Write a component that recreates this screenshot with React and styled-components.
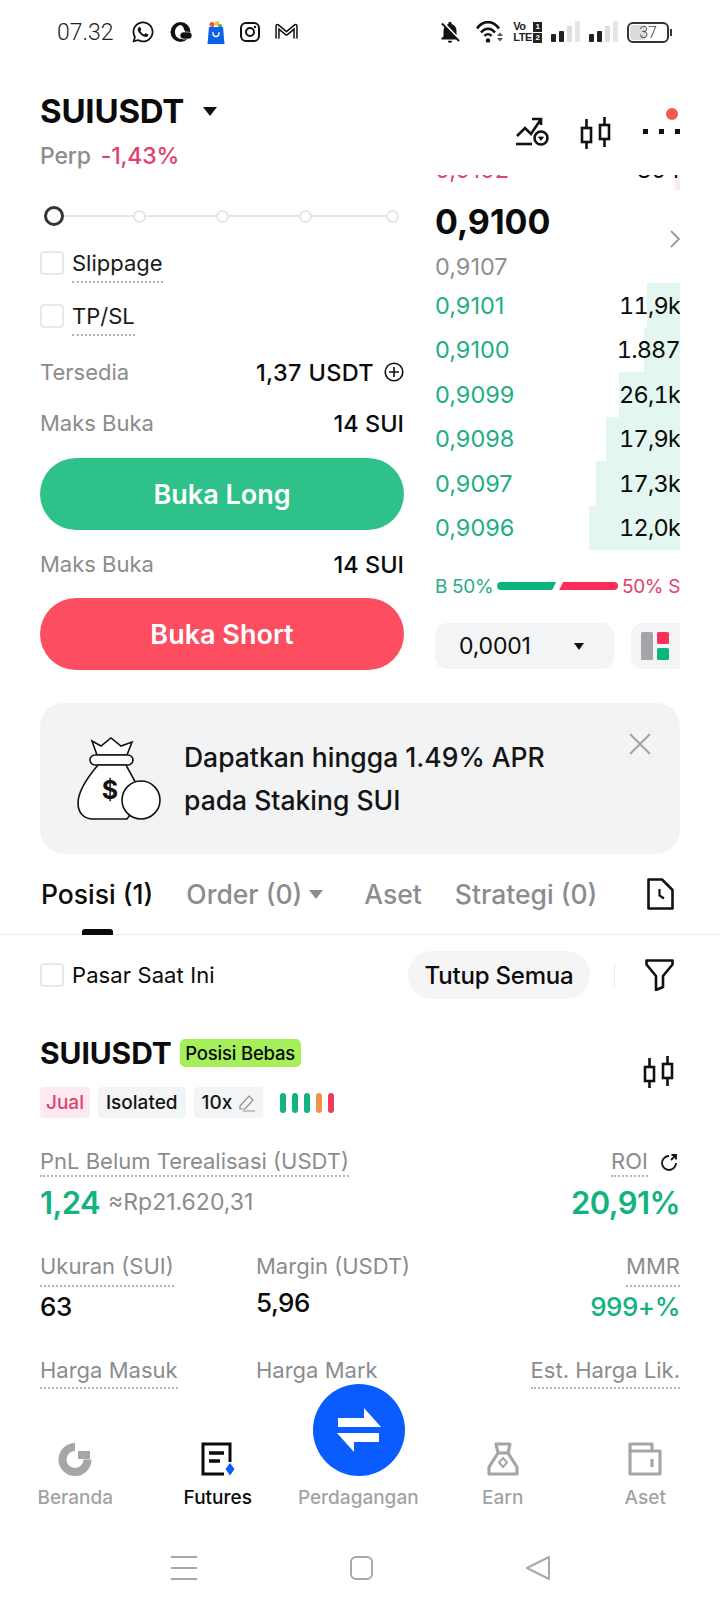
import React from "react";
import styled, { createGlobalStyle } from "styled-components";
import { FaWhatsapp } from "react-icons/fa";
import { MdNotificationsOff } from "react-icons/md";

const GREEN = "#12b281";
const RED = "#e0426b";
const GRAY = "#8c8c8c";
const SOFT = "#f3f4f6";

const GlobalStyle = createGlobalStyle`
  html, body { margin: 0; padding: 0; background: #fff; }
  * { box-sizing: border-box; }
  body { font-family: Inter, "Noto Sans", sans-serif; color: #0b0b0b; }
`;

const Phone = styled.div`
  width: 720px;
  height: 1612px;
  display: flex;
  flex-direction: column;
  overflow: hidden;
  background: #fff;
`;

/* status bar */
const StatusBar = styled.div`
  height: 64px;
  flex: none;
  display: flex;
  align-items: center;
  justify-content: space-between;
  padding: 0 51px 0 57px;
`;
const StatusGroup = styled.div`
  display: flex;
  align-items: center;
  gap: ${(p) => p.$gap || 14}px;
`;
const Clock = styled.span`
  font-family: Roboto, sans-serif;
  font-weight: 300;
  font-size: 23px;
  color: #222;
  margin-right: 2px;
`;
const Volte = styled.div`
  display: grid;
  grid-template-columns: auto 9px;
  column-gap: 1px;
  align-items: center;
  justify-items: start;
  font-family: "Liberation Sans", sans-serif;
  font-weight: 700;
  font-size: 11px;
  line-height: 11px;
  letter-spacing: -0.4px;
  color: #222;
`;
const SimTag = styled.span`
  width: 9px;
  height: 10px;
  background: #222;
  color: #fff;
  font-size: 8px;
  line-height: 10px;
  text-align: center;
`;
const Battery = styled.div`
  width: 42px;
  height: 21px;
  border: 2px solid #333;
  border-radius: 6px;
  padding: 1px;
  position: relative;
  background: linear-gradient(to right, #dcdcdc 0 ${(p) => p.$level * 0.42}px, #fff ${(p) => p.$level * 0.42}px);
  background-clip: content-box;
  font-family: Roboto, sans-serif;
  font-weight: 300;
  font-size: 16px;
  line-height: 15px;
  text-align: center;
  color: #444;
  &::after {
    content: "";
    position: absolute;
    right: -5px;
    top: 5px;
    width: 2px;
    height: 7px;
    background: #333;
  }
`;
const BellSlot = styled.span`
  display: flex;
  margin-right: 4px;
`;

/* header */
const Header = styled.div`
  height: 111px;
  flex: none;
  display: flex;
  justify-content: space-between;
  padding: 27px 40px 0;
`;
const TitleRow = styled.div`
  display: flex;
  align-items: center;
  height: 40px;
`;
const Title = styled.h1`
  margin: 0;
  font-size: 33px;
  font-weight: 700;
  letter-spacing: -0.2px;
  line-height: 40px;
`;
const Caret = styled.i`
  width: 0;
  height: 0;
  flex: none;
  border-left: ${(p) => p.$size || 7}px solid transparent;
  border-right: ${(p) => p.$size || 7}px solid transparent;
  border-top: ${(p) => (p.$size || 7) * 1.3}px solid ${(p) => p.$color || "#111"};
  margin-left: ${(p) => p.$gap || 0}px;
`;
const SubRow = styled.div`
  display: flex;
  gap: 10px;
  height: 30px;
  margin-top: 10px;
  font-size: 23px;
  line-height: 30px;
  font-weight: 500;
  letter-spacing: -0.2px;
`;
const Muted = styled.span`
  color: ${GRAY};
`;
const Change = styled.span`
  color: ${RED};
`;
const HeaderTools = styled.div`
  display: flex;
  align-items: flex-start;
  gap: 31px;
  padding-top: 26px;
  position: relative;
`;
const Notice = styled.span`
  position: absolute;
  right: 2px;
  top: 17px;
  width: 12px;
  height: 12px;
  border-radius: 50%;
  background: #ee5c4c;
`;

/* trading area */
const Main = styled.div`
  flex: 1;
  min-height: 0;
  overflow: hidden;
`;
const Trade = styled.div`
  display: grid;
  grid-template-columns: 364px 245px;
  column-gap: 31px;
  padding: 0 40px;
  height: 495px;
`;
const Form = styled.div`
  display: flex;
  flex-direction: column;
`;
const Slider = styled.div`
  display: flex;
  align-items: center;
  height: 20px;
  margin: 31px 0 0 4px;
`;
const Thumb = styled.span`
  width: 20px;
  height: 20px;
  flex: none;
  border-radius: 50%;
  border: 3px solid #333;
`;
const Stop = styled.span`
  width: 13px;
  height: 13px;
  flex: none;
  border-radius: 50%;
  border: 2px solid #e4e6e8;
`;
const Track = styled.span`
  flex: none;
  width: ${(p) => p.$w}px;
  height: 2px;
  background: #e4e6e8;
`;
const CheckRow = styled.div`
  display: flex;
  align-items: flex-start;
  gap: 8px;
  margin-top: ${(p) => p.$top}px;
`;
const Box = styled.span`
  width: 24px;
  height: 24px;
  flex: none;
  border: 2px solid #e8e9eb;
  border-radius: 4px;
`;
const CheckText = styled.span`
  font-size: 22px;
  line-height: 24px;
  color: #1a1a1a;
`;
const Dotted = styled(CheckText)`
  padding-bottom: 6px;
  border-bottom: 2px dotted #b5b5b5;
`;
const InfoRow = styled.div`
  display: flex;
  align-items: center;
  justify-content: space-between;
  height: 30px;
  margin-top: ${(p) => p.$top}px;
  font-size: 22px;
`;
const InfoValue = styled.span`
  display: flex;
  align-items: center;
  gap: 10px;
  font-size: 23.5px;
  font-weight: 500;
  letter-spacing: ${(p) => p.$track || 0}px;
`;
const BigButton = styled.button`
  display: block;
  width: 100%;
  height: 72px;
  flex: none;
  margin-top: ${(p) => p.$top}px;
  border: 0;
  border-radius: 36px;
  background: ${(p) => p.$bg};
  color: #fff;
  font-family: inherit;
  font-size: 27px;
  font-weight: 600;
`;

/* order book */
const Book = styled.div`
  overflow: hidden;
  display: flex;
  flex-direction: column;
`;
const BookRow = styled.div`
  display: flex;
  align-items: center;
  justify-content: space-between;
  flex: none;
  height: ${(p) => p.$height || 44.5}px;
  margin-top: ${(p) => p.$top || 0}px;
  font-size: 23.5px;
  background: linear-gradient(to left, ${(p) => p.$fill} ${(p) => p.$depth}px, transparent ${(p) => p.$depth}px);
`;
const BookPrice = styled.span`
  color: ${(p) => p.$color};
`;
const BookSize = styled.span`
  font-variant-numeric: tabular-nums;
  letter-spacing: -0.8px;
`;
const MidRow = styled.div`
  display: flex;
  justify-content: space-between;
  align-items: flex-start;
  flex: none;
  height: 40px;
  margin-top: 12px;
`;
const MidPrice = styled.span`
  font-size: 34px;
  line-height: 40px;
  font-weight: 700;
`;
const MarkPrice = styled.div`
  flex: none;
  height: 30px;
  margin: 10px 0 1px;
  font-size: 23.5px;
  line-height: 30px;
  color: #8f8f8f;
`;
const RatioRow = styled.div`
  display: flex;
  align-items: center;
  justify-content: space-between;
  flex: none;
  height: 24px;
  margin-top: 24px;
  font-size: 19px;
  white-space: nowrap;
  letter-spacing: -0.35px;
`;
const RatioBars = styled.div`
  display: flex;
  gap: 3px;
  flex: 1;
  margin: 0 4px;
`;
const RatioBar = styled.span`
  flex: 1;
  height: 8px;
  background: ${(p) => p.$color};
  border-radius: ${(p) => (p.$left ? "4px 0 0 4px" : "0 4px 4px 0")};
  clip-path: ${(p) =>
    p.$left
      ? "polygon(0 0, 100% 0, calc(100% - 4px) 100%, 0 100%)"
      : "polygon(4px 0, 100% 0, 100% 100%, 0 100%)"};
`;
const BookTools = styled.div`
  display: flex;
  gap: 17px;
  flex: none;
  height: 46px;
  margin-top: 25px;
  width: 260px;
`;
const StepSelect = styled.div`
  width: 179px;
  display: flex;
  align-items: center;
  justify-content: space-between;
  padding: 0 30px 0 24px;
  background: ${SOFT};
  border-radius: 12px;
  font-size: 23px;
  letter-spacing: -0.2px;
`;
const LayoutButton = styled.div`
  width: 60px;
  background: ${SOFT};
  border-radius: 12px;
  padding: 9px 10px;
`;

/* promo */
const Promo = styled.div`
  margin: 33px 40px 0;
  height: 151px;
  padding: 33px 29px 0 37px;
  display: flex;
  align-items: flex-start;
  gap: 21px;
  background: #f2f3f5;
  border-radius: 24px;
`;
const PromoText = styled.p`
  flex: 1;
  margin: 0;
  font-size: 26.5px;
  line-height: 43px;
  font-weight: 500;
  color: #141414;
`;
const PromoClose = styled.div`
  display: flex;
  margin-top: -3px;
`;

/* tabs */
const Tabs = styled.div`
  height: 81px;
  display: flex;
  align-items: center;
  gap: 33px;
  padding: 0 46px 0 41px;
  border-bottom: 1px solid #eeeeee;
`;
const Tab = styled.div`
  display: flex;
  align-items: center;
  position: relative;
  height: 100%;
  font-size: 26.5px;
  font-weight: 500;
  color: ${(p) => (p.$active ? "#0b0b0b" : "#8c8c8c")};
  margin-right: ${(p) => p.$after || 0}px;
  ${(p) =>
    p.$active &&
    `&::after {
      content: "";
      position: absolute;
      left: 41px;
      bottom: -1px;
      width: 31px;
      height: 6px;
      border-radius: 3px 3px 0 0;
      background: #0b0b0b;
    }`}
`;
const TabIcon = styled.div`
  margin-left: auto;
  display: flex;
`;
const FilterRow = styled.div`
  height: 80px;
  display: flex;
  align-items: center;
  padding: 0 46px 0 40px;
`;
const FilterCheck = styled.div`
  display: flex;
  align-items: center;
  gap: 8px;
  margin-right: auto;
  font-size: 22px;
  letter-spacing: 0.1px;
`;
const Pill = styled.div`
  width: 182px;
  height: 48px;
  display: flex;
  align-items: center;
  justify-content: center;
  background: #f5f5f5;
  border-radius: 24px;
  font-size: 24px;
  font-weight: 500;
  letter-spacing: -0.2px;
`;
const Split = styled.span`
  width: 1px;
  height: 24px;
  background: #eeeeee;
  margin: 0 30px 0 24px;
`;

/* position card */
const Card = styled.div`
  padding: 18px 40px 0;
`;
const CardHead = styled.div`
  display: flex;
  justify-content: space-between;
  align-items: center;
`;
const CardIcon = styled.div`
  display: flex;
  margin: 0 6px 8px 0;
`;
const CardTitle = styled.div`
  display: flex;
  align-items: center;
  gap: 8px;
  height: 40px;
`;
const CardName = styled.span`
  font-size: 30px;
  font-weight: 700;
  letter-spacing: -0.1px;
`;
const Badge = styled.span`
  height: 28px;
  padding: 0 4px;
  width: 121px;
  border-radius: 5px;
  background: #a5f05a;
  font-size: 18.5px;
  font-weight: 500;
  line-height: 28px;
  text-align: center;
  letter-spacing: -0.2px;
  white-space: nowrap;
`;
const ChipRow = styled.div`
  display: flex;
  align-items: center;
  gap: 8px;
  margin-top: 14px;
`;
const Chip = styled.span`
  display: flex;
  align-items: center;
  gap: 6px;
  height: 31px;
  padding: 0 ${(p) => p.$pad || 8}px;
  border-radius: 4px;
  background: ${(p) => p.$bg || SOFT};
  color: ${(p) => p.$color || "#141414"};
  font-size: 19px;
  font-weight: 500;
`;
const Leverage = styled.div`
  display: flex;
  gap: 6px;
  margin-left: 9px;
`;
const LeverageBar = styled.span`
  width: 6px;
  height: 20px;
  border-radius: 3px;
  background: ${(p) => p.$color};
`;
const PnlHead = styled.div`
  display: flex;
  justify-content: space-between;
  margin-top: 30px;
`;
const StatLabel = styled.span`
  display: inline-block;
  font-size: 22px;
  line-height: 27px;
  color: ${GRAY};
  padding-bottom: ${(p) => p.$pad || 0}px;
  border-bottom: 2px dotted ${(p) => (p.$plain ? "transparent" : "#b5b5b5")};
  white-space: nowrap;
`;
const RoiLabel = styled.div`
  display: flex;
  align-items: flex-start;
  gap: 12px;
  padding-right: 2px;
`;
const PnlValues = styled.div`
  display: flex;
  justify-content: space-between;
  align-items: center;
  height: 36px;
  margin-top: 7px;
`;
const PnlLeft = styled.div`
  display: flex;
  align-items: center;
  gap: 8px;
`;
const BigGain = styled.span`
  font-size: 31px;
  font-weight: 600;
  letter-spacing: -0.6px;
  color: ${GREEN};
`;
const Approx = styled.span`
  font-size: 23px;
  color: ${GRAY};
`;
const StatGrid = styled.div`
  display: grid;
  grid-template-columns: 216px 1fr auto;
  margin-top: ${(p) => p.$top}px;
`;
const StatCell = styled.div`
  display: flex;
  flex-direction: column;
  align-items: ${(p) => (p.$end ? "flex-end" : "flex-start")};
`;
const StatValue = styled.span`
  font-size: 26px;
  line-height: 30px;
  font-weight: 500;
  letter-spacing: -0.5px;
  margin-top: ${(p) => p.$top || 5}px;
  color: ${(p) => p.$color || "#0b0b0b"};
`;

/* bottom nav */
const BottomNav = styled.div`
  flex: none;
  height: 136px;
  position: relative;
  display: grid;
  grid-template-columns: repeat(5, 142.5px);
  padding: 48px 0 0 4px;
  background: #fff;
`;
const NavItem = styled.div`
  display: flex;
  flex-direction: column;
  align-items: center;
  height: 69px;
  justify-content: flex-end;
  gap: 9px;
  font-size: 19px;
  line-height: 26px;
  font-weight: 500;
  color: ${(p) => (p.$active ? "#0b0b0b" : "#a3a3a3")};
  padding-right: ${(p) => p.$nudge || 0}px;
`;
const Fab = styled.div`
  position: absolute;
  left: 313px;
  top: -10px;
  width: 92px;
  height: 92px;
  border-radius: 50%;
  background: #0a5cff;
`;
const SystemNav = styled.div`
  flex: none;
  height: 82px;
  display: flex;
  align-items: center;
  justify-content: center;
  gap: 153px;
  padding-bottom: 6px;
`;

const Icon = ({ w, h, children, ...rest }) => (
  <svg width={w} height={h} viewBox={`0 0 ${w} ${h}`} fill="none" {...rest}>
    {children}
  </svg>
);

const AdsIcon = () => (
  <Icon w={22} h={22}>
    <circle cx="10.5" cy="11" r="10" fill="#111" />
    <path d="M5 11c0-4 3-7 6-7 2 1 3 3 3 5 2 1 1 2 0 3-3 0-3 4 1 6-6 1-10-2-10-7z" fill="#fff" />
    <rect x="10" y="11" width="12" height="7" rx="3.5" fill="#111" stroke="#fff" strokeWidth="0.6" />
  </Icon>
);
const BagIcon = () => (
  <Icon w={18} h={23}>
    <circle cx="5" cy="3.5" r="2.5" fill="#e5544b" />
    <circle cx="10" cy="2.5" r="2.4" fill="#f2c230" />
    <circle cx="13" cy="5" r="2" fill="#35b26b" />
    <path d="M2 6h14l1.5 17H.5z" fill="#0b62e8" />
    <path d="M6 11v1.5a3 3 0 0 0 6 0V11" stroke="#fff" strokeWidth="1.3" />
  </Icon>
);
const InstaIcon = () => (
  <Icon w={20} h={20}>
    <rect x="1" y="1" width="18" height="18" rx="5" stroke="#111" strokeWidth="2" />
    <circle cx="10" cy="10" r="4" stroke="#111" strokeWidth="2" />
    <circle cx="15" cy="5" r="1.2" fill="#111" />
  </Icon>
);
const MailIcon = () => (
  <Icon w={23} h={18}>
    <path d="M2.5 15.5V3l9 7.5 9-7.5v12.5" stroke="#111" strokeWidth="4.4" strokeLinejoin="round" />
    <path d="M2.5 15.5V3l9 7.5 9-7.5v12.5" stroke="#fff" strokeWidth="1.4" strokeLinejoin="round" />
  </Icon>
);
const WifiIcon = () => (
  <Icon w={28} h={22}>
    <path d="M1 7.5C7-1 17-1 23 7.5" stroke="#111" strokeWidth="2.6" />
    <path d="M5 11.5c4-5 10-5 14 0" stroke="#111" strokeWidth="2.6" />
    <path d="M8.5 15c2-2.5 5-2.5 7 0" stroke="#111" strokeWidth="2.4" />
    <circle cx="12" cy="19.5" r="2.2" fill="#111" />
    <path d="M21 15l3-3.5 3 3.5zM21 17l3 3.5 3-3.5z" fill="#555" />
  </Icon>
);
const SignalIcon = () => (
  <Icon w={29} h={22}>
    <rect x="0" y="13" width="5" height="8" rx="1" fill="#222" />
    <rect x="8" y="10" width="5" height="11" rx="1" fill="#222" />
    <rect x="16" y="5" width="5" height="16" fill="#dedede" />
    <rect x="24" y="0" width="5" height="21" fill="#e6e6e6" />
  </Icon>
);
const TrendIcon = () => (
  <Icon w={34} h={30} stroke="#111" strokeWidth="2.6">
    <path d="M2 19l8-8 6 6L25 3.5M17 2h9v6" />
    <path d="M1 27h16" />
    <circle cx="26" cy="21" r="6.5" />
    <path d="M23.5 20h5l-2.5 3.5z" fill="#111" strokeWidth="0.8" />
  </Icon>
);
const CandleIcon = () => (
  <Icon w={31} h={32} stroke="#111" strokeWidth="2.6">
    <rect x="2" y="11" width="9" height="14" />
    <rect x="20" y="8" width="9" height="14" />
    <path d="M6.5 2v9M6.5 25v7M24.5 0v8M24.5 22v8" />
  </Icon>
);
const MoreIcon = () => (
  <Icon w={38} h={28}>
    <rect x="1" y="12" width="5" height="5" fill="#111" />
    <rect x="17" y="12" width="5" height="5" fill="#111" />
    <rect x="33" y="12" width="5" height="5" fill="#111" />
  </Icon>
);
const PlusIcon = () => (
  <Icon w={20} h={20} stroke="#111" strokeWidth="1.6">
    <circle cx="10" cy="10" r="8.8" />
    <path d="M5 10h10M10 5v10" />
  </Icon>
);
const Chevron = () => (
  <Icon w={10} h={18} style={{ marginTop: 28 }}>
    <path d="M1 1l8 8-8 8" stroke="#999" strokeWidth="1.8" />
  </Icon>
);
const LayoutIcon = () => (
  <Icon w={28} h={28}>
    <rect x="0" y="0" width="12" height="28" rx="1.5" fill="#a3a5a8" />
    <rect x="16" y="0" width="12" height="12" rx="1.5" fill="#f9305a" />
    <rect x="16" y="16" width="12" height="12" rx="1.5" fill="#0bb87a" />
  </Icon>
);
const BagMoney = () => (
  <Icon w={86} h={85} stroke="#111" strokeWidth="1.6" style={{ flex: "none" }}>
    <path d="M15 5l9 5 10-8 10 8 11-4-5 13H20z" fill="#fff" />
    <rect x="13" y="19" width="43" height="10" rx="5" fill="#fff" />
    <path d="M21 29C10 42 1 55 1 67c0 10 6 16 15 16h34l16-23-17-31z" fill="#fff" />
    <circle cx="64" cy="64" r="19" fill="#fff" />
    <text x="33" y="63" fontFamily="Inter, sans-serif" fontWeight="700" fontSize="25" fill="#111" stroke="none" textAnchor="middle">$</text>
  </Icon>
);
const CloseIcon = () => (
  <Icon w={22} h={22}>
    <path d="M1 1l20 20M21 1L1 21" stroke="#a3a3a3" strokeWidth="2" />
  </Icon>
);
const HistoryIcon = () => (
  <Icon w={27} h={32} stroke="#111" strokeWidth="2.6">
    <path d="M1.5 1.5H15L25.5 12v18.5h-24z" strokeLinejoin="round" />
    <path d="M12.5 11v6.5l4.500 3" strokeWidth="2.2" />
  </Icon>
);
const FunnelIcon = () => (
  <Icon w={29} h={32} stroke="#111" strokeWidth="2.6">
    <path d="M1.5 1.5h26v4L18 17v11l-7 3V17L1.5 5.5z" strokeLinejoin="round" />
  </Icon>
);
const PencilIcon = () => (
  <Icon w={17} h={18} stroke="#8f8f8f" strokeWidth="1.2">
    <path d="M2 12L11 2l4 4-8 9H2zM5 17h12" />
  </Icon>
);
const RoiIcon = () => (
  <Icon w={18} h={18} style={{ marginTop: 5 }} stroke="#111" strokeWidth="1.8">
    <path d="M9 3a7 7 0 1 0 7 7M11 7l5-5M11.5 2H16v4.5" />
  </Icon>
);
const HomeNav = () => (
  <Icon w={34} h={34}>
    <path d="M17 5a12.5 12.5 0 1 0 12.5 12.5" stroke="#a6a6a6" strokeWidth="8" />
    <path d="M20 9h12v8H20z" fill="#a6a6a6" />
  </Icon>
);
const FuturesNav = () => (
  <Icon w={34} h={34}>
    <path d="M29 20V2H2v30h21" stroke="#0b0b0b" strokeWidth="3" />
    <path d="M8 11h15M8 19h11" stroke="#0b0b0b" strokeWidth="3.4" />
    <path d="M29 21l4.5 6-4.5 6.5-4.5-6.5z" fill="#0a5cff" />
  </Icon>
);
const SwapIcon = () => (
  <Icon w={92} h={92}>
    <path d="M25 34h26V24l17 19H25zM24 49h42v9H41v10z" fill="#fff" />
  </Icon>
);
const EarnNav = () => (
  <Icon w={32} h={34} stroke="#a6a6a6" strokeWidth="3.2">
    <path d="M9 2h14l-2 9 9 14v7H2v-7l9-14z" strokeLinejoin="round" />
    <path d="M10 11h12" />
    <path d="M16 16l4 4.5-4 4.5-4-4.5z" strokeWidth="2" />
  </Icon>
);
const WalletNav = () => (
  <Icon w={34} h={34} stroke="#a6a6a6" strokeWidth="3.2">
    <path d="M2 9V2h22v7M2 9h30v23H2z" strokeLinejoin="round" />
    <path d="M24 17v8" />
  </Icon>
);
const MenuIcon = () => (
  <Icon w={26} h={24}>
    <path d="M0 1h26M0 12h26M0 23h26" stroke="#a8a8a8" strokeWidth="2" />
  </Icon>
);
const SquareIcon = () => (
  <Icon w={23} h={24}>
    <rect x="1" y="1" width="21" height="22" rx="5" stroke="#a8a8a8" strokeWidth="2" />
  </Icon>
);
const BackIcon = () => (
  <Icon w={24} h={24}>
    <path d="M23 1v22L1 12z" stroke="#a8a8a8" strokeWidth="2" strokeLinejoin="round" />
  </Icon>
);

const bids = [
  { price: "0,9101", size: "11,9k", depth: 33 },
  { price: "0,9100", size: "1.887", depth: 36 },
  { price: "0,9099", size: "26,1k", depth: 61 },
  { price: "0,9098", size: "17,9k", depth: 74 },
  { price: "0,9097", size: "17,3k", depth: 84 },
  { price: "0,9096", size: "12,0k", depth: 91 },
];
const leverage = [GREEN, GREEN, GREEN, "#f2934a", "#ef3b5f"];

const App = () => {
  return (
    <Phone>
      <GlobalStyle />
      <StatusBar>
        <StatusGroup $gap={15}>
          <Clock>07.32</Clock>
          <FaWhatsapp size={24} color="#111" />
          <AdsIcon />
          <BagIcon />
          <InstaIcon />
          <MailIcon />
        </StatusGroup>
        <StatusGroup $gap={9}>
          <BellSlot>
            <MdNotificationsOff size={26} color="#111" />
          </BellSlot>
          <WifiIcon />
          <Volte>
            <span>Vo</span>
            <SimTag>1</SimTag>
            <span>LTE</span>
            <SimTag>2</SimTag>
          </Volte>
          <SignalIcon />
          <SignalIcon />
          <Battery $level={37}>37</Battery>
        </StatusGroup>
      </StatusBar>

      <Header>
        <div>
          <TitleRow>
            <Title>SUIUSDT</Title>
            <Caret $gap={19} />
          </TitleRow>
          <SubRow>
            <Muted>Perp</Muted>
            <Change>-1,43%</Change>
          </SubRow>
        </div>
        <HeaderTools>
          <TrendIcon />
          <CandleIcon />
          <MoreIcon />
          <Notice />
        </HeaderTools>
      </Header>

      <Main>
        <Trade>
          <Form>
            <Slider>
              <Thumb />
              <Track $w={68.5} />
              <Stop />
              <Track $w={70} />
              <Stop />
              <Track $w={70} />
              <Stop />
              <Track $w={74} />
              <Stop />
            </Slider>
            <CheckRow $top={25}>
              <Box />
              <Dotted>Slippage</Dotted>
            </CheckRow>
            <CheckRow $top={21}>
              <Box />
              <Dotted>TP/SL</Dotted>
            </CheckRow>
            <InfoRow $top={21}>
              <Muted>Tersedia</Muted>
              <InfoValue $track={0.35}>
                1,37 USDT <PlusIcon />
              </InfoValue>
            </InfoRow>
            <InfoRow $top={21}>
              <Muted>Maks Buka</Muted>
              <InfoValue>14 SUI</InfoValue>
            </InfoRow>
            <BigButton $top={20} $bg="#2fc18a">Buka Long</BigButton>
            <InfoRow $top={19}>
              <Muted>Maks Buka</Muted>
              <InfoValue>14 SUI</InfoValue>
            </InfoRow>
            <BigButton $top={19} $bg="#fc4d61">Buka Short</BigButton>
          </Form>

          <Book>
            <BookRow $height={42} $top={-27} $fill="#fdeaf0" $depth={5}>
              <BookPrice $color={RED}>0,9102</BookPrice>
              <BookSize>304</BookSize>
            </BookRow>
            <MidRow>
              <MidPrice>0,9100</MidPrice>
              <Chevron />
            </MidRow>
            <MarkPrice>0,9107</MarkPrice>
            {bids.map((bid) => (
              <BookRow key={bid.price} $fill="#e3f7f0" $depth={bid.depth}>
                <BookPrice $color="#1fae85">{bid.price}</BookPrice>
                <BookSize>{bid.size}</BookSize>
              </BookRow>
            ))}
            <RatioRow>
              <BookPrice $color="#27ae83">B 50%</BookPrice>
              <RatioBars>
                <RatioBar $left $color="#0bb27a" />
                <RatioBar $color="#fb2c55" />
              </RatioBars>
              <BookPrice $color={RED}>50% S</BookPrice>
            </RatioRow>
            <BookTools>
              <StepSelect>
                0,0001
                <Caret $size={5.5} />
              </StepSelect>
              <LayoutButton>
                <LayoutIcon />
              </LayoutButton>
            </BookTools>
          </Book>
        </Trade>

        <Promo>
          <BagMoney />
          <PromoText>
            Dapatkan hingga 1.49% APR
            <br />
            pada Staking SUI
          </PromoText>
          <PromoClose>
            <CloseIcon />
          </PromoClose>
        </Promo>

        <Tabs>
          <Tab $active>Posisi (1)</Tab>
          <Tab $after={8}>
            Order (0)
            <Caret $size={7.5} $color="#8c8c8c" $gap={7} />
          </Tab>
          <Tab>Aset</Tab>
          <Tab>Strategi (0)</Tab>
          <TabIcon>
            <HistoryIcon />
          </TabIcon>
        </Tabs>

        <FilterRow>
          <FilterCheck>
            <Box />
            Pasar Saat Ini
          </FilterCheck>
          <Pill>Tutup Semua</Pill>
          <Split />
          <FunnelIcon />
        </FilterRow>

        <Card>
          <CardHead>
            <div>
              <CardTitle>
                <CardName>SUIUSDT</CardName>
                <Badge>Posisi Bebas</Badge>
              </CardTitle>
              <ChipRow>
                <Chip $bg="#fdeaf0" $color={RED} $pad={6}>Jual</Chip>
                <Chip>Isolated</Chip>
                <Chip>
                  10x <PencilIcon />
                </Chip>
                <Leverage>
                  {leverage.map((color, i) => (
                    <LeverageBar key={i} $color={color} />
                  ))}
                </Leverage>
              </ChipRow>
            </div>
            <CardIcon>
              <CandleIcon />
            </CardIcon>
          </CardHead>

          <PnlHead>
            <StatLabel>PnL Belum Terealisasi (USDT)</StatLabel>
            <RoiLabel>
              <StatLabel>ROI</StatLabel>
              <RoiIcon />
            </RoiLabel>
          </PnlHead>
          <PnlValues>
            <PnlLeft>
              <BigGain>1,24</BigGain>
              <Approx>≈Rp21.620,31</Approx>
            </PnlLeft>
            <BigGain>20,91%</BigGain>
          </PnlValues>

          <StatGrid $top={33}>
            <StatCell>
              <StatLabel $pad={5}>Ukuran (SUI)</StatLabel>
              <StatValue>63</StatValue>
            </StatCell>
            <StatCell>
              <StatLabel $plain $pad={5}>Margin (USDT)</StatLabel>
              <StatValue $top={1}>5,96</StatValue>
            </StatCell>
            <StatCell $end>
              <StatLabel $pad={5}>MMR</StatLabel>
              <StatValue $color={GREEN}>999+%</StatValue>
            </StatCell>
          </StatGrid>

          <StatGrid $top={35}>
            <StatCell>
              <StatLabel $pad={3}>Harga Masuk</StatLabel>
            </StatCell>
            <StatCell>
              <StatLabel $plain $pad={3}>Harga Mark</StatLabel>
            </StatCell>
            <StatCell $end>
              <StatLabel $pad={3}>Est. Harga Lik.</StatLabel>
            </StatCell>
          </StatGrid>
        </Card>
      </Main>

      <BottomNav>
        <NavItem>
          <HomeNav />
          Beranda
        </NavItem>
        <NavItem $active>
          <FuturesNav />
          Futures
        </NavItem>
        <NavItem $nudge={4}>
          <span>Perdagangan</span>
        </NavItem>
        <NavItem>
          <EarnNav />
          Earn
        </NavItem>
        <NavItem>
          <WalletNav />
          Aset
        </NavItem>
        <Fab>
          <SwapIcon />
        </Fab>
      </BottomNav>

      <SystemNav>
        <MenuIcon />
        <SquareIcon />
        <BackIcon />
      </SystemNav>
    </Phone>
  );
};

export default App;
